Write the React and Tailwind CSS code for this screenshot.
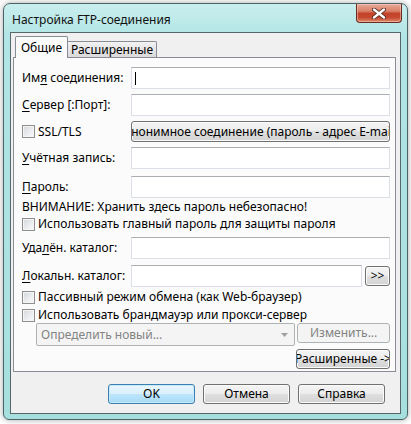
import React from "react";

// Vista-style push button
function Btn({ children, className = "", primary = false, disabled = false }) {
  const look = disabled
    ? "border-[#adb2b5] bg-[#f4f4f4] text-[#838383]"
    : primary
    ? "border-[#3c7fb1] bg-[linear-gradient(to_bottom,#eaf6fd_0%,#d9f0fc_49%,#bee6fd_50%,#a7d9f5_100%)] shadow-[inset_0_0_0_1px_#c6eafc]"
    : "border-[#707070] bg-[linear-gradient(to_bottom,#f4f4f4_0%,#ececec_49%,#dfdfdf_50%,#d3d3d3_100%)] shadow-[inset_0_0_0_1px_#fbfbfb]";
  return (
    <div
      className={`flex items-center justify-center overflow-hidden whitespace-nowrap rounded-[3px] border text-[12px] ${look} ${className}`}
    >
      {children}
    </div>
  );
}

function Input({ className = "", caret = false }) {
  return (
    <div
      className={`h-[22px] flex items-center bg-white border border-[#dbdfe6] border-t-[#abadb3] ${className}`}
    >
      {caret && <span className="ml-[3px] w-px h-[13px] bg-black" />}
    </div>
  );
}

function Check() {
  return (
    <span className="w-[13px] h-[13px] shrink-0 border border-[#8e8f8f] bg-[linear-gradient(135deg,#d3d6db_0%,#eceef0_60%,#fafafa_100%)] shadow-[inset_0_0_0_1px_#f4f4f4]" />
  );
}

function Label({ pre = "", u, post = "" }) {
  return (
    <span className="w-[109px] shrink-0 whitespace-nowrap">
      {pre}
      <span className="underline underline-offset-2 decoration-1">{u}</span>
      {post}
    </span>
  );
}

export default function App() {
  return (
    <div
      className="w-[411px] h-[424px] bg-white pl-[3px] pt-[3px] text-black"
      style={{ fontFamily: '"Noto Sans", "Open Sans", sans-serif' }}
    >
      {/* window frame */}
      <div className="w-[405px] h-[417px] flex flex-col rounded-t-[7px] rounded-b-[6px] border border-[#4c6466] bg-[linear-gradient(to_bottom,#c9eeee_0%,#b2e5e5_8%,#a7dfdf_100%)] px-[6px] pb-[5px] shadow-[0_0_6px_rgba(0,0,0,0.35)]">
        {/* title bar */}
        <div className="h-[28px] shrink-0 flex items-start justify-between">
          <span className="pt-[8px] pl-[2px] text-[12px] leading-[16px] text-[#111]">
            Настройка FTP-соединения
          </span>
          <div className="w-[46px] h-[19px] -mr-[1px] flex items-center justify-center rounded-b-[4px] border border-t-0 border-[#6b2b1f] bg-[linear-gradient(to_bottom,#e9ab9c_0%,#d98068_40%,#c2432a_52%,#c5492f_75%,#de8d6d_100%)] shadow-[inset_0_0_0_1px_rgba(255,220,210,0.45)]">
            <svg width="14" height="11" viewBox="0 0 14 11">
              <path d="M2 1.5 L12 9.5 M12 1.5 L2 9.5" stroke="#4a2018" strokeWidth="4" strokeLinecap="round" />
              <path d="M2 1.5 L12 9.5 M12 1.5 L2 9.5" stroke="#ffffff" strokeWidth="2.4" strokeLinecap="round" />
            </svg>
          </div>
        </div>

        {/* client area */}
        <div className="flex-1 flex flex-col border border-[#56686a] bg-[#f0f0f0] pl-[2px] pr-[4px] pt-[3px] text-[12px] leading-[16px]">
          {/* tabs */}
          <div className="h-[21px] flex items-end pl-[2px]">
            <div className="relative z-10 -mb-px h-[22px] w-[53px] flex items-center justify-center border border-b-0 border-[#898c95] bg-[#fbfbfb] rounded-t-[2px]">
              Общие
            </div>
            <div className="h-[16px] w-[89px] flex items-center justify-center border border-l-0 border-b-0 border-[#898c95] bg-[linear-gradient(to_bottom,#f2f2f2_0%,#e6e6e6_50%,#d9d9d9_100%)] rounded-tr-[2px] pt-[1px]">
              Расширенные
            </div>
          </div>

          {/* tab panel */}
          <div className="h-[315px] flex flex-col border border-[#898c95] bg-[#fbfbfb] pl-[8px] pr-[5px] pt-[9px] pb-[2px]">
            <div className="h-[22px] flex items-center">
              <Label pre="Им" u="я" post=" соединения:" />
              <Input className="flex-1" caret />
            </div>
            <div className="mt-[5px] h-[22px] flex items-center">
              <Label u="С" post="ервер [:Порт]:" />
              <Input className="flex-1" />
            </div>
            <div className="mt-[5px] h-[21px] flex items-center">
              <span className="w-[109px] shrink-0 flex items-center gap-[3px]">
                <Check />
                SSL/TLS
              </span>
              <Btn className="flex-1 h-[21px]">
                Анонимное соединение (пароль - адрес E-mail)
              </Btn>
            </div>
            <div className="mt-[5px] h-[22px] flex items-center">
              <Label u="У" post="чётная запись:" />
              <Input className="flex-1" />
            </div>
            <div className="mt-[7px] h-[22px] flex items-center">
              <Label u="П" post="ароль:" />
              <Input className="flex-1" />
            </div>
            <div className="h-[18px] flex items-center whitespace-nowrap">
              ВНИМАНИЕ: Хранить здесь пароль небезопасно!
            </div>
            <div className="h-[16px] flex items-center gap-[3px] whitespace-nowrap">
              <Check />
              Использовать главный пароль для защиты пароля
            </div>
            <div className="mt-[5px] h-[22px] flex items-center">
              <Label pre="Уда" u="л" post="ён. каталог:" />
              <Input className="flex-1" />
            </div>
            <div className="mt-[6px] h-[22px] flex items-center">
              <Label u="Л" post="окальн. каталог:" />
              <Input className="flex-1" />
              <Btn className="ml-[3px] w-[25px] h-[20px] text-[11px]">&gt;&gt;</Btn>
            </div>
            <div className="h-[20px] flex items-center gap-[3px] whitespace-nowrap">
              <Check />
              Пассивный режим обмена (как Web-браузер)
            </div>
            <div className="h-[16px] flex items-center gap-[3px] whitespace-nowrap">
              <Check />
              Использовать брандмауэр или прокси-сервер
            </div>
            <div className="h-[23px] flex items-start pl-[14px]">
              <div className="w-[260px] h-[23px] flex items-center justify-between rounded-[2px] border border-[#adb2b5] bg-[#f4f4f4] pl-[4px] pr-[6px] text-[#838383]">
                <span>Определить новый...</span>
                <svg width="7" height="4" viewBox="0 0 7 4">
                  <path d="M0 0 H7 L3.5 4 Z" fill="#a0a0a0" />
                </svg>
              </div>
              <Btn disabled className="ml-[2px] w-[93px] h-[20px]">
                Изменить...
              </Btn>
            </div>
            <div className="mt-[3px] h-[20px] flex justify-end">
              <Btn className="w-[94px] h-[20px]">Расширенные -&gt;</Btn>
            </div>
          </div>

          {/* dialog buttons */}
          <div className="mt-[12px] flex justify-end gap-[8px] pr-[11px] pb-[9px]">
            <Btn primary className="w-[87px] h-[20px]">
              OK
            </Btn>
            <Btn className="w-[87px] h-[20px]">Отмена</Btn>
            <Btn className="w-[87px] h-[20px]">Справка</Btn>
          </div>
        </div>
      </div>
    </div>
  );
}
